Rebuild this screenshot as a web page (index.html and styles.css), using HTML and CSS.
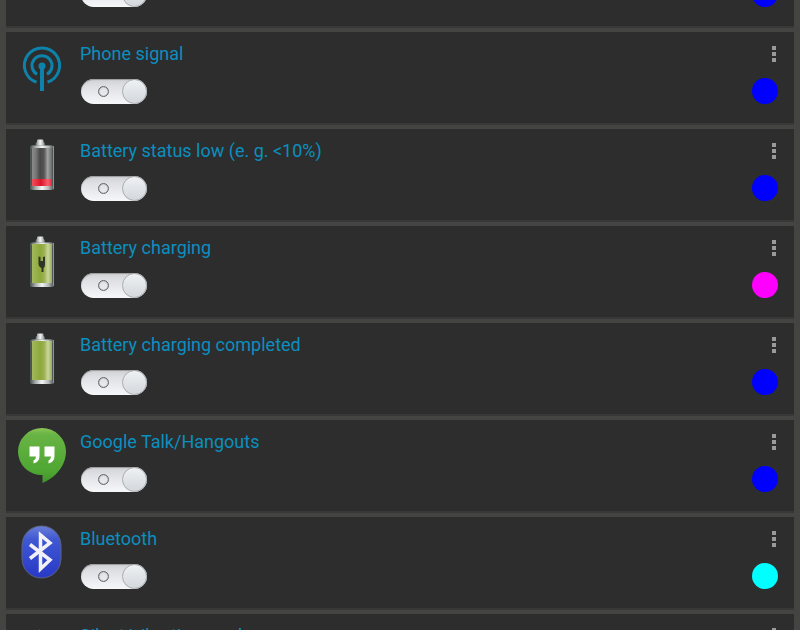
FILE: index.html
```html
<!DOCTYPE html>
<html lang="en">
<head>
  <meta charset="UTF-8">
  <title>Notifications</title>
  <link rel="stylesheet" href="styles.css">
</head>
<body>
  <svg class="defs" aria-hidden="true">
    <defs>
      <linearGradient id="metal">
        <stop offset="0" stop-color="#59605f"/>
        <stop offset=".2" stop-color="#a4aaa8"/>
        <stop offset=".5" stop-color="#f4f6f6"/>
        <stop offset=".8" stop-color="#b0b5b4"/>
        <stop offset="1" stop-color="#59605f"/>
      </linearGradient>
      <linearGradient id="glass">
        <stop offset="0" stop-color="#8a8a8a"/>
        <stop offset=".2" stop-color="#777"/>
        <stop offset=".4" stop-color="#484848"/>
        <stop offset=".6" stop-color="#555"/>
        <stop offset=".78" stop-color="#a2a2a2"/>
        <stop offset="1" stop-color="#6a6a6a"/>
      </linearGradient>
      <linearGradient id="red">
        <stop offset="0" stop-color="#f0505c"/>
        <stop offset=".45" stop-color="#dc1428"/>
        <stop offset=".8" stop-color="#f8606c"/>
        <stop offset="1" stop-color="#e02a3c"/>
      </linearGradient>
      <linearGradient id="green">
        <stop offset="0" stop-color="#a3b95c"/>
        <stop offset=".4" stop-color="#8ea83a"/>
        <stop offset=".6" stop-color="#9ab04e"/>
        <stop offset=".8" stop-color="#cbd6a0"/>
        <stop offset="1" stop-color="#98ae50"/>
      </linearGradient>
      <linearGradient id="talk" x2="0" y2="1">
        <stop offset="0" stop-color="#8cc456"/>
        <stop offset=".12" stop-color="#68b444"/>
        <stop offset=".8" stop-color="#4ea632"/>
        <stop offset="1" stop-color="#40922a"/>
      </linearGradient>
      <linearGradient id="blue" x2="0" y2="1">
        <stop offset="0" stop-color="#6a7ed8"/>
        <stop offset=".25" stop-color="#4059d2"/>
        <stop offset="1" stop-color="#2838c8"/>
      </linearGradient>
      <g id="case">
        <path d="M17.500 9.500V7q0-1.500 1.500-2V3.500q0-1 1-1h4.500q1 0 1 1V5q1.500.5 1.500 2v2.500z" fill="url(#metal)"/>
        <rect x="12" y="8.500" width="24" height="44.500" rx="1.500" fill="#4c5655"/>
        <rect x="13" y="8.500" width="22" height="3.500" rx="1.500" fill="url(#metal)"/>
        <rect x="13" y="48" width="22" height="5" rx="2" fill="url(#metal)"/>
        <path d="M35.500 9v43" stroke="#8d9593" stroke-width="1"/>
      </g>
    </defs>
  </svg>

  <main class="list">
    <section class="card">
      <span class="icon"></span>
      <div class="info">
        <span class="title"></span>
        <input class="switch" type="checkbox" aria-label="Enabled" checked>
      </div>
      <div class="actions">
        <button class="menu" aria-label="Menu"><i></i><i></i><i></i></button>
        <button class="color blue" aria-label="Color"></button>
      </div>
    </section>

    <section class="card">
      <svg class="icon" viewBox="0 0 48 56" fill="none" stroke="#0d83ac" stroke-width="3">
        <path d="M18.500 42.200a17.600 17.600 0 1 1 11 0"/>
        <path d="M19 34.300a10 10 0 1 1 10 0"/>
        <circle cx="24" cy="26" r="3.500" fill="#0d83ac" stroke="none"/>
        <path d="M24 26v25" stroke-width="4"/>
      </svg>
      <div class="info">
        <label class="title" for="signal">Phone signal</label>
        <input class="switch" type="checkbox" id="signal" checked>
      </div>
      <div class="actions">
        <button class="menu" aria-label="Menu"><i></i><i></i><i></i></button>
        <button class="color blue" aria-label="Color"></button>
      </div>
    </section>

    <section class="card">
      <svg class="icon" viewBox="0 0 48 56">
        <use href="#case"/>
        <rect x="14" y="11" width="20" height="31" fill="url(#glass)"/>
        <rect x="14" y="42" width="20" height="7" fill="url(#red)"/>
      </svg>
      <div class="info">
        <label class="title" for="low">Battery status low (e. g. &lt;10%)</label>
        <input class="switch" type="checkbox" id="low" checked>
      </div>
      <div class="actions">
        <button class="menu" aria-label="Menu"><i></i><i></i><i></i></button>
        <button class="color blue" aria-label="Color"></button>
      </div>
    </section>

    <section class="card">
      <svg class="icon" viewBox="0 0 48 56">
        <use href="#case"/>
        <rect x="14" y="10" width="20" height="39" fill="url(#green)"/>
        <path d="M20.500 22.500l2 .5v4h2.500v-4l2-.5v8q0 2.500-1.500 3.500v4h-2v-4q-3-1.500-3-4.500z" fill="#2f3524"/>
      </svg>
      <div class="info">
        <label class="title" for="charging">Battery charging</label>
        <input class="switch" type="checkbox" id="charging" checked>
      </div>
      <div class="actions">
        <button class="menu" aria-label="Menu"><i></i><i></i><i></i></button>
        <button class="color magenta" aria-label="Color"></button>
      </div>
    </section>

    <section class="card">
      <svg class="icon" viewBox="0 0 48 56">
        <use href="#case"/>
        <rect x="14" y="10" width="20" height="39" fill="url(#green)"/>
      </svg>
      <div class="info">
        <label class="title" for="completed">Battery charging completed</label>
        <input class="switch" type="checkbox" id="completed" checked>
      </div>
      <div class="actions">
        <button class="menu" aria-label="Menu"><i></i><i></i><i></i></button>
        <button class="color blue" aria-label="Color"></button>
      </div>
    </section>

    <section class="card">
      <svg class="icon" viewBox="0 0 48 56">
        <path d="M24 0a24 23.500 0 0 1 24 23.500C48 38 37 50 24.500 55v-8A23.700 23.500 0 0 1 0 23.500 24 23.500 0 0 1 24 0z" fill="url(#talk)"/>
        <path d="M11.500 18.500h10V28q0 6-6 7.500v-3q2.500-1 2.500-4h-6.500zM26.500 18.500h10V28q0 6-6 7.500v-3q2.500-1 2.500-4h-6.500z" fill="#fff"/>
      </svg>
      <div class="info">
        <label class="title" for="talk-on">Google Talk/Hangouts</label>
        <input class="switch" type="checkbox" id="talk-on" checked>
      </div>
      <div class="actions">
        <button class="menu" aria-label="Menu"><i></i><i></i><i></i></button>
        <button class="color blue" aria-label="Color"></button>
      </div>
    </section>

    <section class="card">
      <svg class="icon" viewBox="0 0 48 56">
        <path d="M23.500 1C34 1 43 9 43 21v12C43 45 34 53 23.500 53S4 45 4 33V21C4 9 13 1 23.500 1z" fill="url(#blue)" stroke="#5c6380" stroke-width="1"/>
        <path d="M12 19.500l20 15.500-9.500 9V10l9.500 8-20 15.500" fill="none" stroke="#f2f2f6" stroke-width="3.500"/>
      </svg>
      <div class="info">
        <label class="title" for="bluetooth">Bluetooth</label>
        <input class="switch" type="checkbox" id="bluetooth" checked>
      </div>
      <div class="actions">
        <button class="menu" aria-label="Menu"><i></i><i></i><i></i></button>
        <button class="color cyan" aria-label="Color"></button>
      </div>
    </section>

    <section class="card">
      <svg class="icon" viewBox="0 0 48 56">
        <path d="M22 7v34l-9-9H6V16h7z" fill="#0d83ac"/>
      </svg>
      <div class="info">
        <label class="title" for="silent">Silent/vibration mode</label>
        <input class="switch" type="checkbox" id="silent" checked>
      </div>
      <div class="actions">
        <button class="menu" aria-label="Menu"><i></i><i></i><i></i></button>
        <button class="color blue" aria-label="Color"></button>
      </div>
    </section>
  </main>
</body>
</html>
```

FILE: styles.css
```css
*, *::before, *::after { box-sizing:border-box; }
body { margin:0; height:100vh; overflow:hidden; background:#444443;
       font-family:Roboto, sans-serif; }
.defs { display:block; width:0; height:0; }

/* the list is scrolled part of the way into its first card */
.list { display:flex; flex-direction:column; gap:4px;
        margin-top:-65px; padding:0 6px; }
.card { display:flex; gap:14px; padding:8px 16px 19px 12px;
        background:#2d2d2d; border-bottom:2px solid #383838; }
.icon { flex:none; width:48px; height:56px; }

.info { flex:1; display:flex; flex-direction:column; align-items:flex-start;
        gap:11px; padding-top:2px; }
.title { height:26px; font-size:18px; line-height:24px; color:#0a8fbf; }

.switch { appearance:none; display:flex; align-items:center;
          justify-content:space-between; width:66px; height:25px;
          margin:0 0 0 1px; padding-left:17px; border-radius:13px;
          background:linear-gradient(#cfd1d5, #dfe0e4 30%, #f6f7f9);
          box-shadow:inset 0 1px 1px #999; cursor:pointer; }
.switch::before { content:""; width:11px; height:11px; border-radius:50%;
                  border:1px solid #66686b; box-shadow:inset 0 0 1px #66686b; }
.switch::after { content:""; width:25px; height:25px; border-radius:50%;
                 border:1px solid #a9adb0;
                 background:linear-gradient(#eff1f3, #d3d8dc); }

.actions { display:flex; flex-direction:column; align-items:flex-end;
           gap:15px; padding-top:5px; }
.menu { display:flex; flex-direction:column; align-items:center;
        justify-content:space-between; width:8px; height:18px;
        padding:1px 0; border:0; background:none; cursor:pointer; }
.menu i { width:4px; height:4px; background:#9a9a9a; }
.color { width:26px; height:26px; padding:0; border:0;
         border-radius:50%; cursor:pointer; }
.blue { background:#00f; }
.magenta { background:#f0f; }
.cyan { background:#0ff; }
```
